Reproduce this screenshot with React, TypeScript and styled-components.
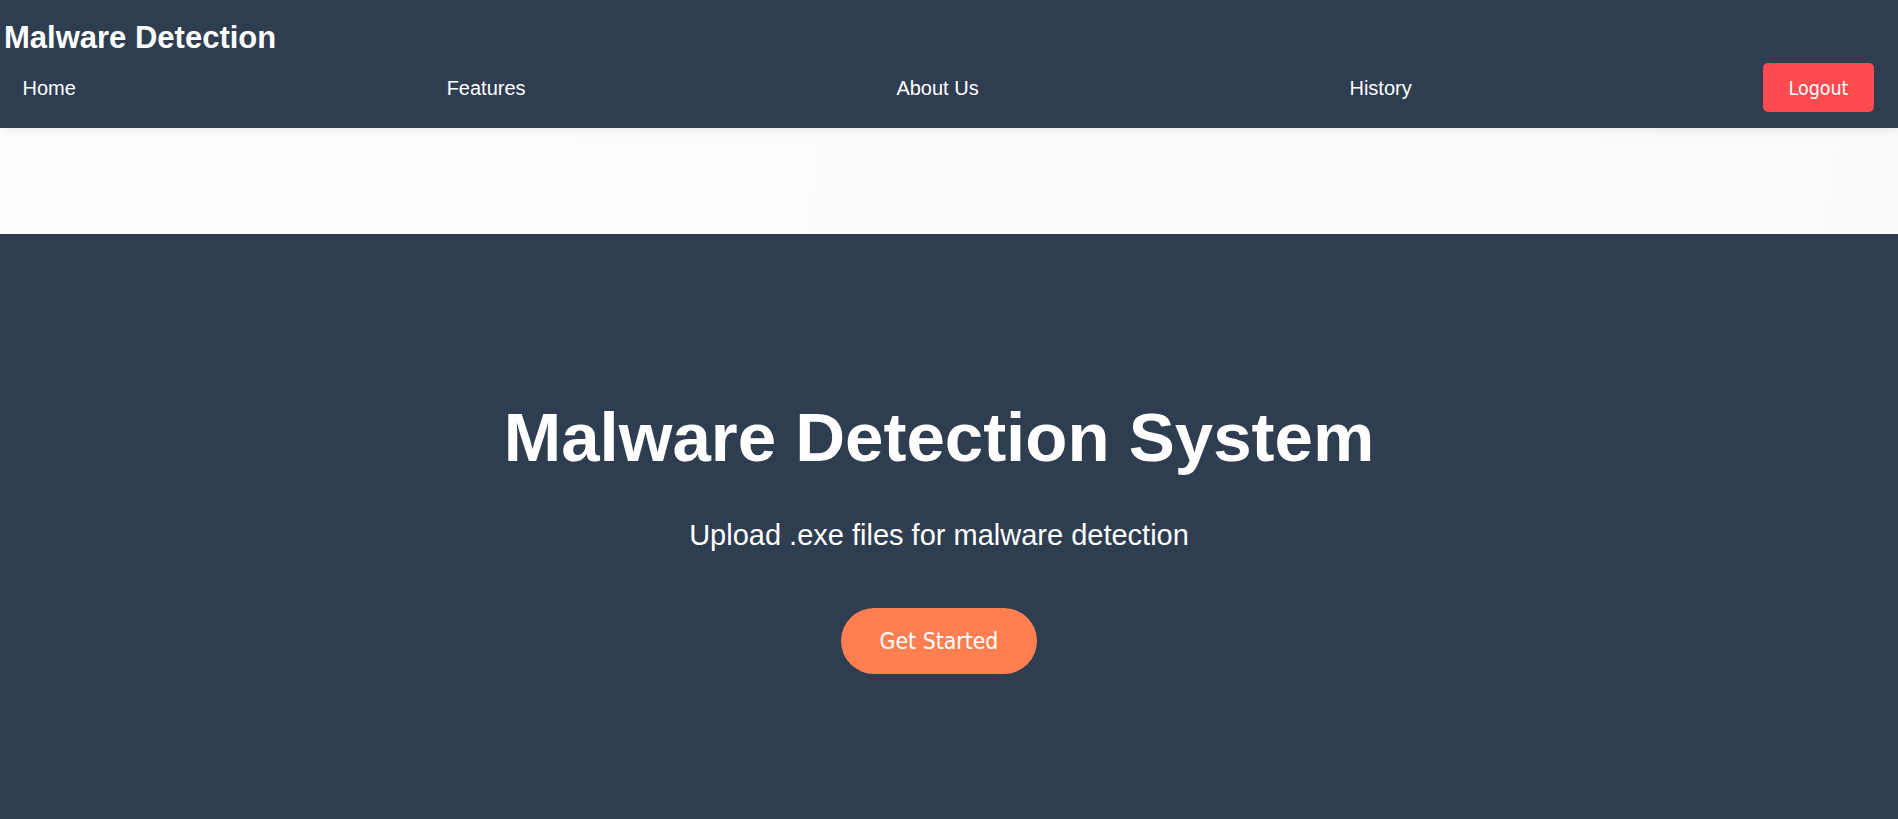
import React from "react";
import styled, { createGlobalStyle } from "styled-components";

const GlobalStyle = createGlobalStyle`
  * { box-sizing: border-box; }
  html, body { margin: 0; padding: 0; }
  body {
    font-family: "Liberation Sans", Arial, sans-serif;
    background: #fcfcfc;
    overflow: hidden;
  }
`;

const Page = styled.div`
  display: flex;
  flex-direction: column;
  min-height: 100vh;
`;

const Header = styled.header`
  position: relative;
  z-index: 1;
  background: #2e3d50;
  padding: 19px 0 16px 0;
  box-shadow: 0 2px 10px rgba(0, 0, 0, 0.08);
`;

const Brand = styled.h1`
  margin: 0 0 0 4px;
  font-size: 31px;
  line-height: 37px;
  font-weight: 700;
  color: #ffffff;
`;

const Nav = styled.nav`
  display: flex;
  justify-content: space-between;
  align-items: center;
  margin-top: 7px;
  padding: 0 24px 0 3px;
`;

const NavLink = styled.a`
  padding: 2px 19.5px 0;
  font-size: 20px;
  line-height: 23px;
  color: #ffffff;
  text-decoration: none;
`;

const LogoutButton = styled.button`
  width: 111px;
  height: 49px;
  padding: 2px 0 0;
  border: none;
  border-radius: 5px;
  background: #ff4b50;
  color: #ffffff;
  font-family: "DejaVu Sans Condensed", "DejaVu Sans", sans-serif;
  font-stretch: condensed;
  font-size: 19.5px;
  cursor: pointer;
`;

const Band = styled.div`
  height: 106px;
  background: linear-gradient(100deg, #fefefe 0%, #fcfcfc 50%, #fafafa 100%);
`;

const Hero = styled.section`
  flex: 1;
  background: #2e3d50;
  display: flex;
  flex-direction: column;
  align-items: center;
  padding: 163px 20px 0 0;
`;

const HeroTitle = styled.h2`
  margin: 0;
  font-size: 69px;
  line-height: 82px;
  font-weight: 700;
  color: #ffffff;
`;

const HeroSubtitle = styled.p`
  margin: 39px 0 0 0;
  font-size: 29px;
  line-height: 35px;
  color: #ffffff;
`;

const CtaButton = styled.button`
  margin-top: 55px;
  width: 196px;
  height: 66px;
  border: none;
  border-radius: 33px;
  background: #ff7f50;
  color: #ffffff;
  font-family: "DejaVu Sans Condensed", "DejaVu Sans", sans-serif;
  font-stretch: condensed;
  font-size: 22.8px;
  cursor: pointer;
`;

const links = ["Home", "Features", "About Us", "History"];

export default function App() {
  return (
    <Page>
      <GlobalStyle />
      <Header>
        <Brand>Malware Detection</Brand>
        <Nav>
          {links.map((l) => (
            <NavLink key={l} href="#">
              {l}
            </NavLink>
          ))}
          <LogoutButton>Logout</LogoutButton>
        </Nav>
      </Header>
      <Band />
      <Hero>
        <HeroTitle>Malware Detection System</HeroTitle>
        <HeroSubtitle>Upload .exe files for malware detection</HeroSubtitle>
        <CtaButton>Get Started</CtaButton>
      </Hero>
    </Page>
  );
}
